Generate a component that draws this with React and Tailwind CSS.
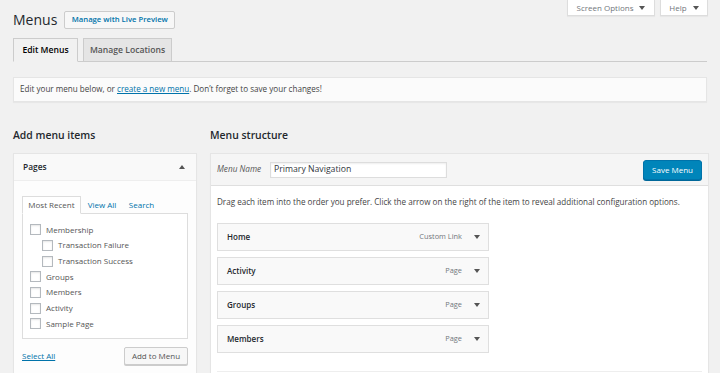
import React from "react";

const Tri = ({ up = false, className = "" }) => (
  <svg width="6" height="4" viewBox="0 0 6 4" className={className}>
    <path d={up ? "M0 4H6L3 0Z" : "M0 0H6L3 4Z"} fill="currentColor" />
  </svg>
);

const Check = ({ label, indent = false }) => (
  <div className={`flex items-center h-[15.67px] gap-[5px] ${indent ? "pl-[12px]" : ""}`}>
    <span className="w-[11px] h-[11px] border border-[#b4b9be] bg-white shadow-[inset_0_1px_2px_rgba(0,0,0,0.1)] shrink-0" />
    <span className="text-[8px] text-[#555] leading-none whitespace-nowrap">{label}</span>
  </div>
);

const Item = ({ title, type }) => (
  <div className="w-[272px] h-[28px] border border-[#dfdfdf] bg-[#f9f9f9] flex items-center justify-between pl-[9px] pr-[8px]">
    <span className="text-[8px] font-semibold text-[#23282d]">{title}</span>
    <span className="flex items-center gap-[12px]">
      <span className="text-[7.4px] text-[#72777c]">{type}</span>
      <Tri className="text-[#555]" />
    </span>
  </div>
);

export default function App() {
  return (
    <div className="w-[720px] h-[373px] overflow-hidden bg-[#f1f1f1] text-[#444] font-['Open_Sans',sans-serif]">
      {/* top row */}
      <div className="flex justify-between items-start pl-[13px] pr-[12px]">
        <div className="flex items-center gap-[7px] pt-[11px]">
          <h1 className="text-[14px] leading-[18px] text-[#23282d]">Menus</h1>
          <button className="h-[18px] w-[111px] border border-[#ccc] bg-[#f7f7f7] rounded-[2px] text-[7.7px] font-semibold text-[#0073aa] flex items-center justify-center whitespace-nowrap">
            Manage with Live Preview
          </button>
        </div>
        <div className="flex gap-[5px]">
          <div className="h-[16px] w-[88px] bg-white border border-t-0 border-[#ddd] shadow-[0_1px_1px_rgba(0,0,0,0.04)] flex items-center justify-center gap-[6px] text-[8px] text-[#72777c]">
            Screen Options <Tri className="text-[#555]" />
          </div>
          <div className="h-[16px] w-[48px] bg-white border border-t-0 border-[#ddd] shadow-[0_1px_1px_rgba(0,0,0,0.04)] flex items-center justify-center gap-[6px] text-[8px] text-[#72777c]">
            Help <Tri className="text-[#555]" />
          </div>
        </div>
      </div>

      {/* tabs */}
      <div className="mx-[13px] mt-[9px] flex items-end gap-[5px] border-b border-[#ccc]">
        <div className="-mb-px h-[24px] w-[65px] flex items-center justify-center border border-[#ccc] border-b-[#f1f1f1] bg-[#f1f1f1] text-[8.6px] font-semibold text-[#000]">
          Edit Menus
        </div>
        <div className="-mb-px h-[24px] w-[89px] flex items-center justify-center border border-[#ccc] bg-[#e5e5e5] text-[8.6px] font-semibold text-[#555]">
          Manage Locations
        </div>
      </div>

      {/* notice */}
      <div className="mx-[13px] mt-[15px] h-[25px] border border-[#e5e5e5] bg-[#fbfbfb] shadow-[0_1px_1px_rgba(0,0,0,0.04)] flex items-center pl-[6px] text-[8.1px] text-[#444]">
        <span>
          Edit your menu below, or{" "}
          <span className="text-[#0073aa] underline">create a new menu</span>. Don’t forget to save your changes!
        </span>
      </div>

      {/* columns */}
      <div className="flex gap-[13px] pl-[13px]">
        {/* left */}
        <div className="w-[184px] shrink-0">
          <h2 className="mt-[26px] h-[14px] leading-[14px] text-[10.4px] font-semibold text-[#23282d]">Add menu items</h2>
          <div className="mt-[11px] border border-[#e5e5e5] bg-[#fdfdfd] shadow-[0_1px_1px_rgba(0,0,0,0.04)] h-[240px]">
            <div className="h-[27px] flex items-center justify-between pl-[9px] pr-[11px] bg-[#f9f9f9] border-b border-[#eee] text-[8.4px] font-semibold text-[#23282d]">
              Pages <Tri up className="text-[#555]" />
            </div>
            <div className="pt-[15px] px-[8px]">
              <div className="flex items-end h-[17px]">
                <div className="-mb-px h-[18px] w-[59px] flex items-center justify-center border border-[#ddd] border-b-white bg-white text-[8px] text-[#555] relative z-10">
                  Most Recent
                </div>
                <div className="h-[17px] w-[42px] flex items-center justify-center text-[8px] text-[#0073aa]">View All</div>
                <div className="h-[17px] w-[37px] flex items-center justify-center text-[8px] text-[#0073aa]">Search</div>
              </div>
              <div className="h-[126px] border border-[#ddd] bg-white pt-[8px] pl-[7px]">
                <Check label="Membership" />
                <Check label="Transaction Failure" indent />
                <Check label="Transaction Success" indent />
                <Check label="Groups" />
                <Check label="Members" />
                <Check label="Activity" />
                <Check label="Sample Page" />
              </div>
              <div className="mt-[8px] flex items-center justify-between">
                <span className="text-[8px] text-[#0073aa] underline">Select All</span>
                <button className="h-[18px] w-[64px] border border-[#ccc] bg-[#f7f7f7] rounded-[2px] shadow-[0_1px_0_#ccc] text-[8px] text-[#555] flex items-center justify-center">
                  Add to Menu
                </button>
              </div>
            </div>
          </div>
        </div>

        {/* right */}
        <div className="w-[499px] shrink-0">
          <h2 className="mt-[26px] h-[14px] leading-[14px] text-[10.4px] font-semibold text-[#23282d]">Menu structure</h2>
          <div className="mt-[11px] border border-[#e5e5e5] bg-white shadow-[0_1px_1px_rgba(0,0,0,0.04)] h-[240px]">
            <div className="h-[32px] bg-[#f5f5f5] border-b border-[#dfdfdf] flex items-center justify-between px-[6px]">
              <div className="flex items-center gap-[8px]">
                <span className="w-[45px] text-[8.2px] italic text-[#555] whitespace-nowrap">Menu Name</span>
                <div className="w-[177px] h-[16px] border border-[#ddd] bg-white shadow-[inset_0_1px_2px_rgba(0,0,0,0.07)] flex items-center px-[3px] text-[8.7px] text-[#32373c]">
                  Primary Navigation
                </div>
              </div>
              <button className="w-[59px] h-[20px] rounded-[3px] bg-[#0085ba] border border-[#0073aa] shadow-[0_1px_0_#006799] text-white text-[8px] flex items-center justify-center">
                Save Menu
              </button>
            </div>
            <div className="px-[6px]">
              <p className="pt-[10px] leading-[12px] text-[8.1px] text-[#444] whitespace-nowrap">
                Drag each item into the order you prefer. Click the arrow on the right of the item to reveal additional configuration options.
              </p>
              <div className="mt-[15px] flex flex-col gap-[6px]">
                <Item title="Home" type="Custom Link" />
                <Item title="Activity" type="Page" />
                <Item title="Groups" type="Page" />
                <Item title="Members" type="Page" />
              </div>
              <div className="mt-[18px] border-t border-[#eee]" />
            </div>
          </div>
        </div>
      </div>
    </div>
  );
}
